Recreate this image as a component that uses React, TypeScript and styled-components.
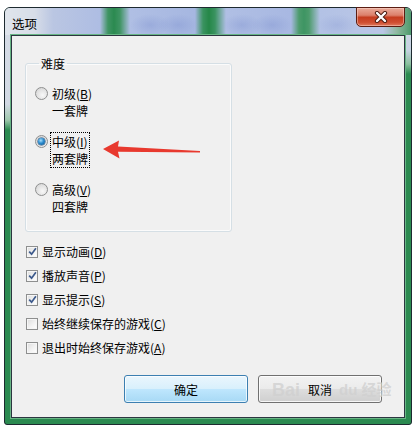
import * as React from "react";
import styled, { createGlobalStyle } from "styled-components";

const GlobalStyle = createGlobalStyle`
  html, body {
    margin: 0;
    background: #ffffff;
  }
  body {
    font-family: "Noto Sans CJK SC", "Microsoft YaHei", sans-serif;
    font-size: 12px;
    color: #000;
  }
  u {
    text-decoration: underline;
    text-underline-offset: 1px;
  }
`;

const levels = [
  { name: "初级", key: "B", desc: "一套牌", checked: false },
  { name: "中级", key: "I", desc: "两套牌", checked: true },
  { name: "高级", key: "V", desc: "四套牌", checked: false },
];

const options = [
  { text: "显示动画", key: "D", checked: true },
  { text: "播放声音", key: "P", checked: true },
  { text: "显示提示", key: "S", checked: true },
  { text: "始终继续保存的游戏", key: "C", checked: false },
  { text: "退出时始终保存游戏", key: "A", checked: false },
];

export default function App() {
  return (
    <>
      <GlobalStyle />
      <Window>
        <TitleBar>
          <Title>选项</Title>
          <CloseButton>
            <svg width="16" height="12" viewBox="0 0 16 12">
              <path d="M4 2 L12 10 M12 2 L4 10" stroke="#4a1a10" strokeWidth="4.2" strokeLinecap="round" />
              <path d="M4 2 L12 10 M12 2 L4 10" stroke="#ffffff" strokeWidth="2.4" strokeLinecap="round" />
            </svg>
          </CloseButton>
        </TitleBar>
        <Client>
          <GroupBox>
            <Legend>难度</Legend>
            <OptionList>
              {levels.map((l) => (
                <Option key={l.key}>
                  <Radio checked={l.checked} />
                  <OptionLabel focused={l.checked}>
                    <Line>
                      {l.name}(<u>{l.key}</u>)
                    </Line>
                    <Line>{l.desc}</Line>
                  </OptionLabel>
                </Option>
              ))}
            </OptionList>
          </GroupBox>

          <CheckList>
            {options.map((o) => (
              <CheckRow key={o.key}>
                <CheckBox checked={o.checked}>
                  {o.checked && (
                    <svg width="9" height="9" viewBox="0 0 9 9">
                      <path d="M1.2 4.6 L3.6 7.2 L7.9 1.2" fill="none" stroke="#3d5a8c" strokeWidth="1.7" />
                    </svg>
                  )}
                </CheckBox>
                <Line>
                  {o.text}(<u>{o.key}</u>)
                </Line>
              </CheckRow>
            ))}
          </CheckList>

          <ButtonRow>
            <Button primary>确定</Button>
            <Button>取消</Button>
          </ButtonRow>

          <Arrow width="100" height="22" viewBox="0 0 100 22">
            <path d="M1 10 L17 1.5 L16 7.5 L98 12 L98 13.5 L16 12.8 L17.5 19.5 Z" fill="#e8392e" />
          </Arrow>

          <WatermarkLeft>Bai</WatermarkLeft>
          <WatermarkRight>du 经验</WatermarkRight>
        </Client>
      </Window>
    </>
  );
}

const Window = styled.div`
  position: relative;
  box-sizing: border-box;
  display: flex;
  flex-direction: column;
  width: 408px;
  height: 418px;
  margin: 7px 0 0 4px;
  border: 1px solid #1e2a30;
  border-radius: 6px 6px 3px 3px;
  background:
    linear-gradient(180deg, #d6dce6 0, #d2d9e4 96px, #9fc8ad 112px, #2b8a50 122px) left top / 6px 100% no-repeat,
    linear-gradient(180deg, #d0d8e6 0, #c7d3e2 42px, #8cbf9f 56px, #2b8a50 66px) right top / 6px 100% no-repeat,
    #2b8a50;
`;

const TitleBar = styled.div`
  display: flex;
  align-items: flex-start;
  height: 27px;
  padding-left: 7px;
  border-radius: 5px 5px 0 0;
  background:
    radial-gradient(ellipse 20px 11px at 145px 17px, rgba(120, 140, 205, 0.35), rgba(120, 140, 205, 0) 100%),
    radial-gradient(ellipse 20px 11px at 173px 17px, rgba(120, 140, 205, 0.35), rgba(120, 140, 205, 0) 100%),
    radial-gradient(ellipse 20px 11px at 237px 17px, rgba(120, 140, 205, 0.35), rgba(120, 140, 205, 0) 100%),
    radial-gradient(ellipse 20px 11px at 267px 17px, rgba(120, 140, 205, 0.35), rgba(120, 140, 205, 0) 100%),
    radial-gradient(ellipse 20px 11px at 332px 17px, rgba(120, 140, 205, 0.25), rgba(120, 140, 205, 0) 100%),
    linear-gradient(
      90deg,
      #e0e5ec 0,
      #d7dde8 30px,
      #bac6e2 48px,
      #aebde3 95px,
      #3f9463 103px,
      #2b8a50 109px,
      #3f9463 115px,
      #b0bfe4 125px,
      #a6b7e1 190px,
      #3a9360 198px,
      #258748 204px,
      #3a9360 210px,
      #b0bfe4 221px,
      #a8b8e2 286px,
      #4c9b6c 294px,
      #3e9563 299px,
      #4c9b6c 304px,
      #b3c2e5 315px,
      #bac6e6 378px,
      #8fb8a0 392px,
      #4d9a6c 406px
    );
`;

const Title = styled.div`
  margin-top: 9px;
  font-size: 12.5px;
  line-height: 14px;
  color: #000;
`;

const CloseButton = styled.div`
  display: flex;
  align-items: center;
  justify-content: center;
  box-sizing: border-box;
  width: 49px;
  height: 20px;
  margin: -1px 6px 0 auto;
  border: 1px solid #5b1d12;
  border-radius: 0 0 5px 5px;
  background: linear-gradient(180deg, #e9ab9a 0%, #dc806b 40%, #c53d1f 52%, #cf4e31 80%, #e07a5c 100%);
  box-shadow: inset 0 0 0 1px rgba(255, 220, 210, 0.45);
`;

const Client = styled.div`
  position: relative;
  flex: 1;
  display: flex;
  flex-direction: column;
  margin: 0 6px 6px 6px;
  padding: 19px 0 0 13px;
  border: 1px solid #2c3640;
  background: #f0f0f0;
  box-shadow: 0 0 0 1px #67b584;
`;

const GroupBox = styled.fieldset`
  box-sizing: border-box;
  width: 207px;
  height: 177px;
  margin: 0;
  padding: 13px 0 0 9px;
  border: 1px solid #d5dfe5;
  border-radius: 3px;
  box-shadow: inset 0 0 0 1px #fbfbfb;
`;

const Legend = styled.legend`
  padding: 0 2px;
  margin-left: 4px;
  line-height: 17px;
`;

const OptionList = styled.div`
  display: flex;
  flex-direction: column;
  gap: 13px;
`;

const Option = styled.div`
  display: flex;
  align-items: flex-start;
  gap: 2px;
`;

const Radio = styled.span<{ checked?: boolean }>`
  position: relative;
  box-sizing: border-box;
  width: 13px;
  height: 13px;
  margin-top: 2px;
  border: 1px solid #8e8f8f;
  border-radius: 50%;
  background: radial-gradient(circle at 60% 65%, #f8f8f8 0, #e2e2e2 55%, #cfcfcf 100%);

  &::after {
    content: "";
    display: ${(p) => (p.checked ? "block" : "none")};
    position: absolute;
    left: 2px;
    top: 2px;
    width: 7px;
    height: 7px;
    border-radius: 50%;
    background: radial-gradient(circle at 40% 35%, #a9e0fb 0, #2c8ccf 45%, #0b4e84 100%);
    box-shadow: 0 0 0 0.5px #1b4a78;
  }
`;

const OptionLabel = styled.div<{ focused?: boolean }>`
  display: flex;
  flex-direction: column;
  padding: 0 1px 0 1px;
  border: 1px dotted ${(p) => (p.focused ? "#000" : "transparent")};
  margin-top: -1px;
`;

const Line = styled.span`
  line-height: 17px;
  white-space: nowrap;
`;

const CheckList = styled.div`
  display: flex;
  flex-direction: column;
  gap: 7px;
  margin-top: 11px;
  padding-left: 1px;
`;

const CheckRow = styled.div`
  display: flex;
  align-items: center;
  gap: 4px;
`;

const CheckBox = styled.span<{ checked?: boolean }>`
  display: flex;
  align-items: center;
  justify-content: center;
  box-sizing: border-box;
  width: 12px;
  height: 12px;
  border: 1px solid #8e8f8f;
  background: linear-gradient(135deg, #dcdcdc 0%, #f4f4f4 60%, #ffffff 100%);
  box-shadow: inset 0 0 0 1px #f6f6f6;
`;

const ButtonRow = styled.div`
  display: flex;
  justify-content: flex-end;
  gap: 10px;
  margin-top: auto;
  margin-bottom: 14px;
  padding-right: 22px;
`;

const Button = styled.div<{ primary?: boolean }>`
  display: flex;
  align-items: center;
  justify-content: center;
  box-sizing: border-box;
  width: 124px;
  height: 28px;
  border: 1px solid ${(p) => (p.primary ? "#3c7fb1" : "#707070")};
  border-radius: 3px;
  background: ${(p) =>
    p.primary
      ? "linear-gradient(180deg, #eaf6fd 0%, #d9f0fc 48%, #bee6fd 52%, #a7d9f5 100%)"
      : "linear-gradient(180deg, #f2f2f2 0%, #ebebeb 48%, #dddddd 52%, #cfcfcf 100%)"};
  box-shadow: inset 0 0 0 1px ${(p) => (p.primary ? "rgba(255,255,255,0.7)" : "rgba(255,255,255,0.8)")};
  line-height: 17px;
`;

const Arrow = styled.svg`
  position: absolute;
  left: 90px;
  top: 103px;
`;

const Watermark = styled.div`
  position: absolute;
  top: 343px;
  font-family: "Liberation Sans", "Noto Sans CJK SC", sans-serif;
  font-weight: bold;
  line-height: 22px;
  color: rgba(208, 208, 208, 0.8);
  pointer-events: none;
  white-space: nowrap;
`;

const WatermarkLeft = styled(Watermark)`
  left: 260px;
  font-size: 18px;
`;

const WatermarkRight = styled(Watermark)`
  left: 327px;
  font-size: 15px;
`;
